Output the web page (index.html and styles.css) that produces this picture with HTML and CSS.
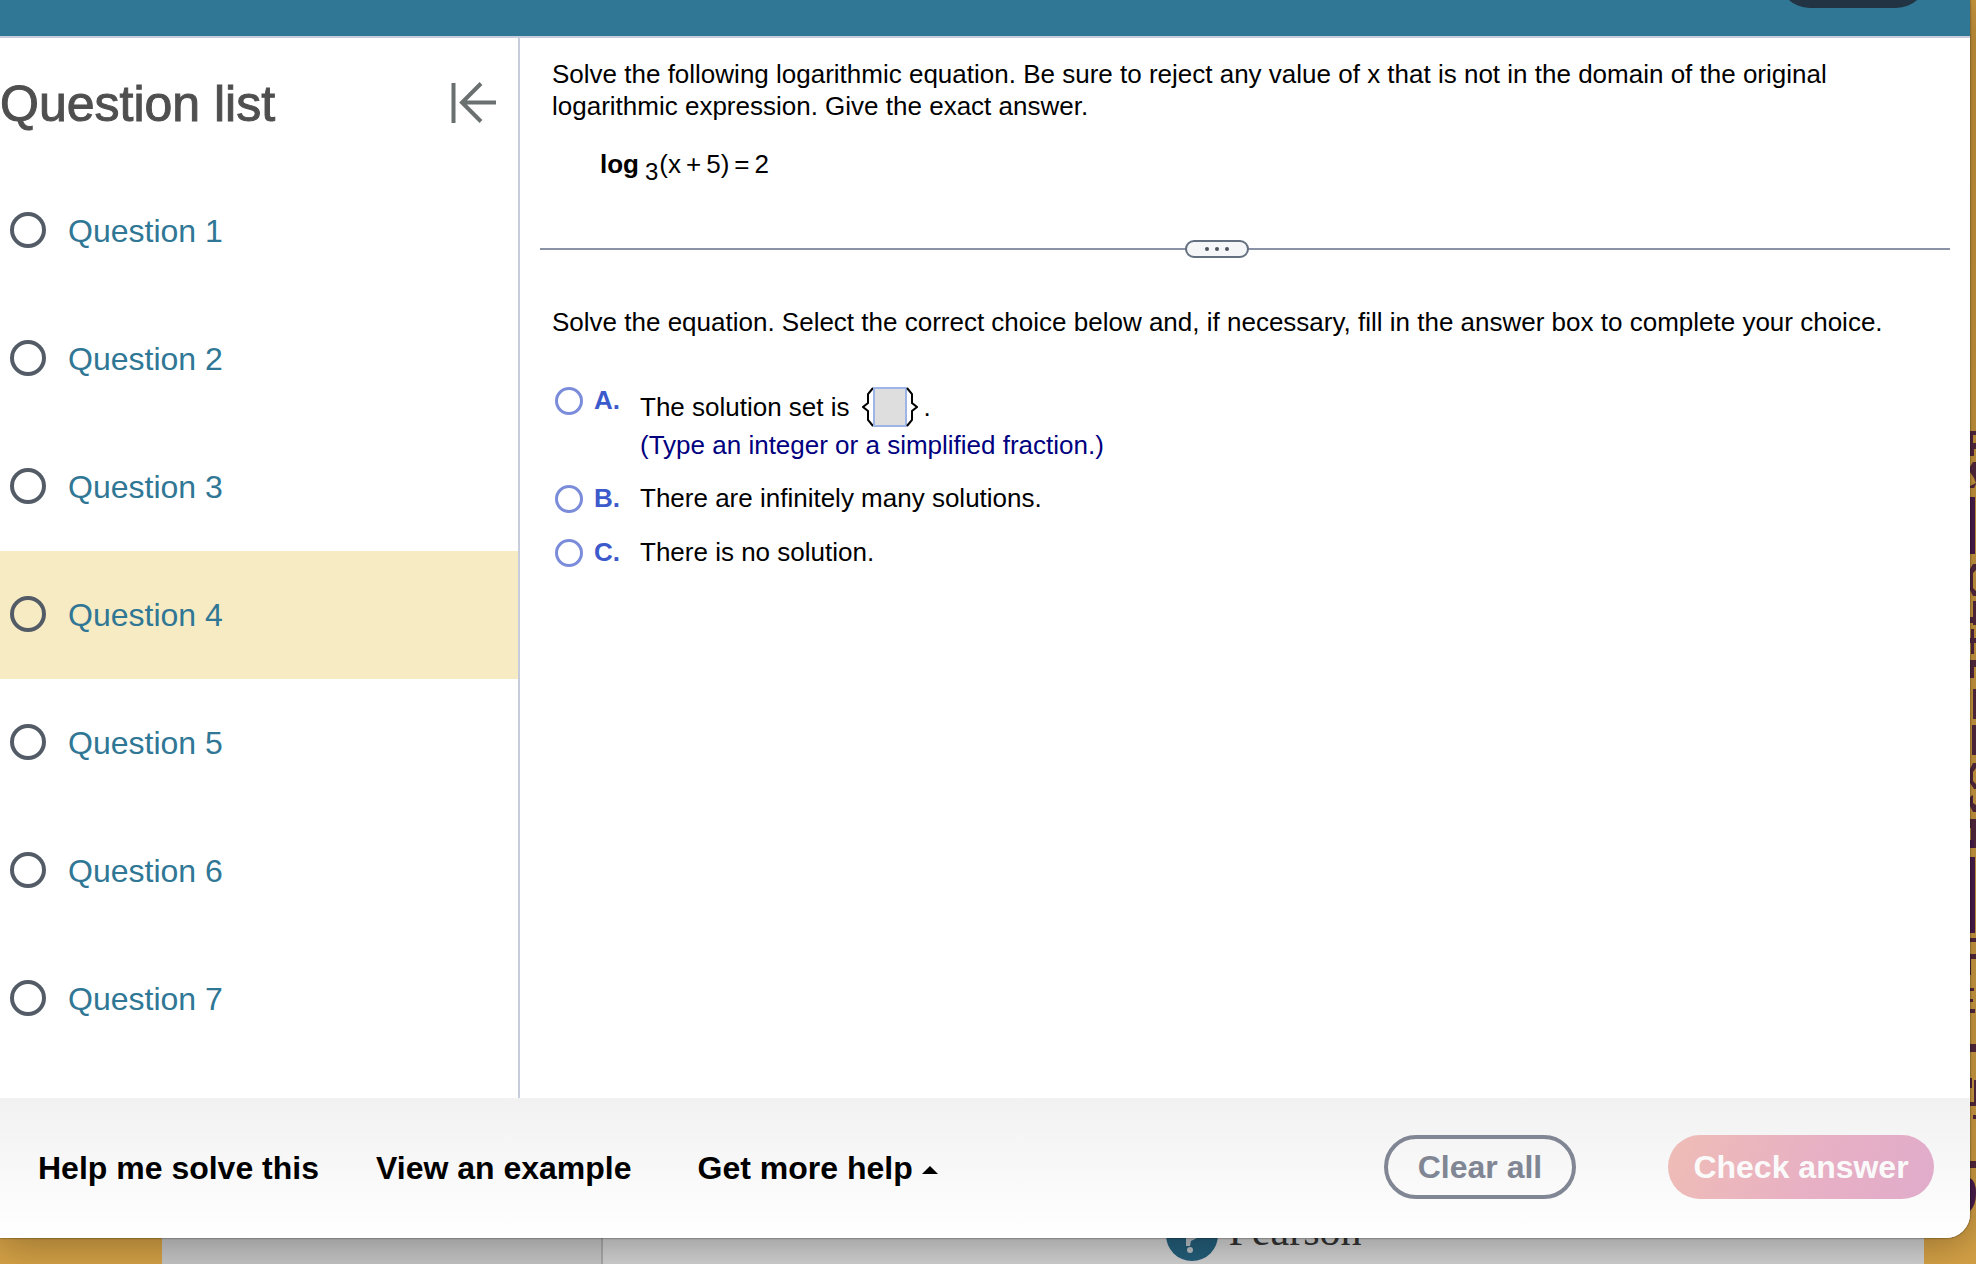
FILE: index.html
```html
<!DOCTYPE html>
<html lang="en">
<head>
<meta charset="utf-8">
<title>Question list</title>
<link rel="stylesheet" href="styles.css">
</head>
<body>
<div class="desktop">
  <svg class="poster" viewBox="0 0 6 1264" aria-hidden="true">
    <g fill="#55283f">
      <path d="M0 431h6v4H3v8h3v6H4v7H0z"/>
      <path d="M6 462H3l-3 5v5l4 6 2 5-6 3v2h4l2-4z"/>
      <path d="M0 497h5v57H0z" fill="#4a1c4b"/>
      <path d="M6 564H3l-3 5v21l3 6h3v-5l-3-3v-15l3-3z"/>
      <path d="M3 601h3v24H3zM0 617h6v6H0zM1 629h3v25H1zM0 638h6v5H0zM0 660h4v18H0zM4 660h2v7H4z"/>
      <path d="M3 689h3v30H3zM2 725h4v30H2z"/>
      <path d="M6 763H3l-3 6v14l4 6h2v-5l-3-3v-9l3-4zM0 797l3-2v8l3 2v7H3l-3-6zM0 819h6v29H1v-20H0z"/>
      <path d="M0 840h4v8H0zM0 857h5v76H0z" fill="#4a1c4b"/>
      <path d="M0 938h6v4H0zM0 954h6v5H0zM0 959h1v16H0zM0 988h4v3H0zM0 999h3v3H0zM0 1009h5v4H0zM0 1044h6v8H0zM0 1078h2v10H0zM4 1080h2v26H0v-4h4zM3 1115h3v4H3zM0 1161h6v7H0z"/>
      <path d="M0 1178q6 3 6 15t-6 18z" fill="#4a1c4b"/>
    </g>
  </svg>

  <div class="window">
    <header class="topbar"><button class="topbar-button" type="button" aria-label="Save"></button></header>

    <div class="workspace">
      <nav class="sidebar" aria-label="Question list">
        <div class="sidebar-head">
          <h1 class="sidebar-title">Question list</h1>
          <button class="collapse" type="button" aria-label="Collapse">
            <svg width="46" height="42" viewBox="0 0 46 42" fill="none" stroke="#6a7070" stroke-width="4"><path d="M2.5 1v40M45 20.500H11M30 1.500L11 20.500l19 19"/></svg>
          </button>
        </div>
        <ul class="questions">
          <li><a class="question" href="#q1"><span class="status"></span>Question 1</a></li>
          <li><a class="question" href="#q2"><span class="status"></span>Question 2</a></li>
          <li><a class="question" href="#q3"><span class="status"></span>Question 3</a></li>
          <li><a class="question current" href="#q4"><span class="status"></span>Question 4</a></li>
          <li><a class="question" href="#q5"><span class="status"></span>Question 5</a></li>
          <li><a class="question" href="#q6"><span class="status"></span>Question 6</a></li>
          <li><a class="question" href="#q7"><span class="status"></span>Question 7</a></li>
        </ul>
      </nav>

      <main class="problem">
        <p class="prompt">Solve the following logarithmic equation. Be sure to reject any value of x that is not in the domain of the original logarithmic expression. Give the exact answer.</p>
        <p class="equation"><b>log</b><span class="base">3</span><span>(x</span><span class="op">+</span><span>5)</span><span class="op">=</span><span>2</span></p>
        <div class="divider">
          <button class="handle" type="button" aria-label="Resize"><i></i><i></i><i></i></button>
        </div>
        <p class="prompt">Solve the equation. Select the correct choice below and, if necessary, fill in the answer box to complete your choice.</p>
        <div class="choices">
          <div class="choice">
            <input class="radio" type="radio" name="choice" id="a">
            <label class="letter" for="a">A.</label>
            <div class="choice-text">
              <div class="fill-in">
                <label for="answer">The solution set is</label>
                <span class="braces">
                  <svg width="12" height="40" viewBox="0 0 12 40" fill="none" stroke="#000" stroke-width="2"><path d="M11 1L6 7v9l-5 4 5 4v9l5 6"/></svg>
                  <input class="answer" id="answer" type="text">
                  <svg width="12" height="40" viewBox="0 0 12 40" fill="none" stroke="#000" stroke-width="2"><path d="M1 1l5 6v9l5 4-5 4v9l-5 6"/></svg>
                </span>
                <span>.</span>
              </div>
              <p class="hint">(Type an integer or a simplified fraction.)</p>
            </div>
          </div>
          <div class="choice">
            <input class="radio" type="radio" name="choice" id="b">
            <label class="letter" for="b">B.</label>
            <label class="choice-text" for="b">There are infinitely many solutions.</label>
          </div>
          <div class="choice">
            <input class="radio" type="radio" name="choice" id="c">
            <label class="letter" for="c">C.</label>
            <label class="choice-text" for="c">There is no solution.</label>
          </div>
        </div>
      </main>
    </div>

    <footer class="actions">
      <button class="help" type="button">Help me solve this</button>
      <button class="help" type="button">View an example</button>
      <button class="help more" type="button">Get more help <span class="caret"></span></button>
      <button class="pill clear" type="button">Clear all</button>
      <button class="pill check" type="button" disabled>Check answer</button>
    </footer>
  </div>

  <div class="behind">
    <div class="page-left"></div>
    <div class="page-right">
      <div class="brand">
        <svg width="52" height="52" viewBox="0 0 52 52"><circle cx="26" cy="26" r="26" fill="#235d78"/><path d="M17 15q0-7 9-7t12 8q0 9-7 13l-6 3-1 5h-4V26q10-3 10-8 0-4-4-4t-5 4z" fill="#b5bcc0"/><circle cx="24" cy="41" r="3" fill="#b5bcc0"/></svg>
        <span>Pearson</span>
      </div>
    </div>
  </div>
</div>
</body>
</html>
```
FILE: styles.css
```css
* { box-sizing: border-box; }

body {
  margin: 0;
  font-family: "Liberation Sans", Arial, sans-serif;
  color: #000;
}

h1, p, ul { margin: 0; padding: 0; }

button {
  font: inherit;
  color: inherit;
  background: none;
  border: 0;
  padding: 0;
}

.desktop {
  position: relative;
  min-height: 100vh;
  display: flex;
  flex-direction: column;
  overflow: hidden;
  background: linear-gradient(#c8953c, #d3a045);
}

.poster {
  position: absolute;
  top: 0;
  right: 0;
  width: 6px;
  height: 1264px;
}

.window {
  position: relative;
  flex: 1;
  display: flex;
  flex-direction: column;
  margin-right: 6px;
  background: #fff;
  border-radius: 0 0 24px 0;
  box-shadow: 0 0 2px rgba(0, 0, 0, .7), 0 6px 40px rgba(0, 0, 0, .3);
  overflow: hidden;
}

.topbar {
  display: flex;
  justify-content: flex-end;
  align-items: flex-start;
  height: 38px;
  padding-right: 42px;
  background: #307795;
  border-bottom: 2px solid #c7cddb;
}

.topbar-button {
  width: 150px;
  height: 64px;
  margin-top: -56px;
  border-radius: 32px;
  background: #223344;
}

.workspace {
  flex: 1;
  display: flex;
}

.sidebar {
  flex: none;
  width: 520px;
  border-right: 2px solid #c7cdda;
}

.sidebar-head {
  display: flex;
  justify-content: space-between;
  align-items: center;
  height: 129px;
  padding-right: 21px;
}

.sidebar-title {
  padding-top: 2px;
  font-size: 50px;
  font-weight: 400;
  color: #4f4f4f;
  -webkit-text-stroke: 1px #4f4f4f;
}

.collapse, .collapse svg { display: block; }

.questions { list-style: none; }

.question {
  display: flex;
  align-items: center;
  gap: 22px;
  height: 128px;
  padding-left: 10px;
  font-size: 32px;
  color: #307795;
  text-decoration: none;
}

.current { background: #f7ebc4; }

.status {
  width: 36px;
  height: 36px;
  margin-bottom: 2px;
  border: 4px solid #535c66;
  border-radius: 50%;
}

.problem {
  flex: 1;
  padding: 20px 20px 0;
  font-size: 26px;
  line-height: 32px;
}

.prompt { padding: 0 12px; }

.equation {
  display: flex;
  padding: 26px 60px 0;
}

.base {
  padding: 8px 1px 0 6px;
  font-size: 24px;
}

.op { padding: 0 5px; }

.divider {
  display: flex;
  align-items: center;
  justify-content: center;
  height: 18px;
  margin: 52px 0 48px;
  padding-right: 56px;
  background: linear-gradient(#8a93a5, #8a93a5) center / 100% 2px no-repeat;
}

.handle {
  display: flex;
  align-items: center;
  justify-content: center;
  gap: 6px;
  width: 64px;
  height: 18px;
  border: 2px solid #647080;
  border-radius: 9px;
  background: #f5f6f8;
}

.handle i {
  width: 4px;
  height: 4px;
  border-radius: 50%;
  background: #4c535c;
}

.choices {
  display: grid;
  gap: 22px;
  padding: 46px 15px 0;
}

.choice {
  display: flex;
  align-items: flex-start;
}

.radio {
  appearance: none;
  flex: none;
  width: 28px;
  height: 28px;
  margin: 3px 11px 0 0;
  border: 3px solid #7b8cda;
  border-radius: 50%;
  background: #fff;
}

.letter {
  width: 46px;
  font-weight: 700;
  color: #3c5acb;
}

.fill-in {
  display: flex;
  align-items: center;
  gap: 6px;
  height: 46px;
}

.braces {
  display: flex;
  margin-left: 6px;
}

.answer {
  width: 34px;
  height: 40px;
  margin: 0 -1px;
  padding: 0;
  border: 2px solid #9db4e6;
  background: #dedede;
}

.hint {
  line-height: 30px;
  color: #00007f;
}

.actions {
  display: flex;
  align-items: center;
  height: 140px;
  padding: 0 36px 0 38px;
  background: linear-gradient(#f1f1f1, #fff);
  font-size: 32px;
  font-weight: 700;
}

.help { margin-right: 57px; }

.more {
  display: flex;
  align-items: center;
  gap: 9px;
  margin: 0 auto 0 9px;
}

.caret {
  margin-top: 4px;
  border: 8px solid transparent;
  border-top: 0;
  border-bottom-color: #000;
}

.pill {
  height: 64px;
  margin-bottom: 2px;
  border-radius: 32px;
}

.clear {
  width: 192px;
  margin-right: 92px;
  border: 4px solid #808693;
  color: #808693;
}

.check {
  width: 266px;
  color: #fafafa;
  background: linear-gradient(110deg, #efbdb6, #e8b0c4 55%, #e0accb);
}

.behind {
  display: flex;
  height: 26px;
  padding: 0 52px 0 162px;
}

.page-left {
  width: 441px;
  background: #c4c4c4;
  border-right: 2px solid #a8a8a8;
}

.page-right {
  flex: 1;
  display: flex;
  justify-content: center;
  background: #cfcfcf;
}

.brand {
  display: flex;
  height: 52px;
  margin-top: -29px;
  gap: 11px;
  font: 42px/44px "Liberation Serif", serif;
  color: #333;
}
```
